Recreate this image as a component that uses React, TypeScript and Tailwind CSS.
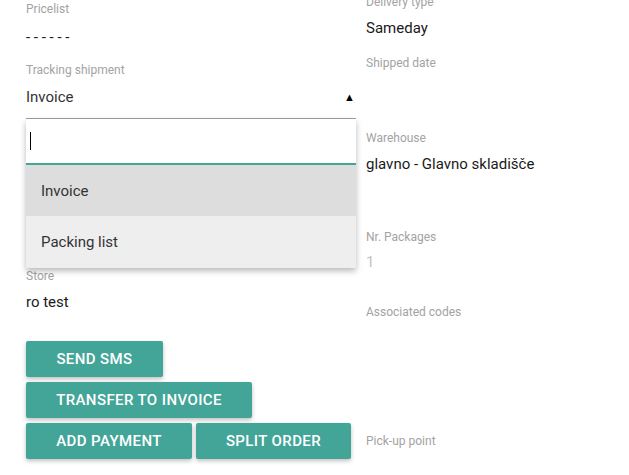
import { useState } from 'react';

const OPTIONS = ['Invoice', 'Packing list'];

function Label({ text, className = '' }: { text: string; className?: string }) {
  return <div className={`text-[12px] leading-[14px] text-[#a3a3a3] ${className}`}>{text}</div>;
}

function Value({ text, className = '' }: { text: string; className?: string }) {
  return <div className={`text-[15px] leading-[20px] text-[#1a1a1a] ${className}`}>{text}</div>;
}

function ActionButton({ label, width }: { label: string; width: string }) {
  return (
    <button
      className={`${width} h-[36px] rounded-[2px] bg-[#42a598] text-white text-[15px] font-medium tracking-[0.4px] uppercase shadow-[0_2px_4px_rgba(0,0,0,0.25)]`}
    >
      {label}
    </button>
  );
}

export default function App() {
  const [selected] = useState('Invoice');

  return (
    <div
      className="w-[629px] h-[475px] overflow-hidden bg-white flex pl-[26px] gap-[10px]"
      style={{ fontFamily: 'Roboto, "Noto Sans", sans-serif' }}
    >
      {/* Left column */}
      <div className="w-[330px] flex flex-col">
        <Label text="Pricelist" className="mt-[2px]" />
        <Value text="- - - - - -" className="mt-[11px]" />
        <Label text="Tracking shipment" className="mt-[16px]" />

        {/* Select with open menu */}
        <div className="relative mt-[10px]">
          <div className="flex items-center justify-between border-b border-[#9e9e9e] pb-[11px] h-[32px]">
            <span className="text-[15px] leading-[20px] text-[#333]">{selected}</span>
            <span className="text-[11px] leading-none text-black mr-[1px]">▲</span>
          </div>
          <div className="absolute left-0 right-0 top-full z-10 bg-white shadow-[0_3px_6px_rgba(0,0,0,0.28)]">
            <div className="h-[46px] flex items-center pl-[4px] border-b-2 border-[#42a598]">
              <div className="w-[1px] h-[18px] bg-black" />
            </div>
            {OPTIONS.map((opt) => (
              <div
                key={opt}
                className={`flex items-center pl-[15px] pt-[1px] text-[15px] text-[#333] ${
                  opt === selected ? 'bg-[#dddddd] h-[51px]' : 'bg-[#eeeeee] h-[52px]'
                }`}
              >
                {opt}
              </div>
            ))}
          </div>
        </div>

        <Label text="Store" className="mt-[150px]" />
        <Value text="ro test" className="mt-[9px]" />

        <div className="mt-[29px] flex flex-col gap-[5px]">
          <div className="flex">
            <ActionButton label="Send SMS" width="w-[137px]" />
          </div>
          <div className="flex">
            <ActionButton label="Transfer to invoice" width="w-[226px]" />
          </div>
          <div className="flex gap-[4px]">
            <ActionButton label="Add payment" width="w-[166px]" />
            <ActionButton label="Split order" width="w-[155px]" />
          </div>
        </div>
      </div>

      {/* Right column */}
      <div className="flex-1 flex flex-col">
        <Label text="Delivery type" className="-mt-[5px]" />
        <Value text="Sameday" className="mt-[9px]" />
        <Label text="Shipped date" className="mt-[18px]" />
        <Label text="Warehouse" className="mt-[61px]" />
        <Value text="glavno - Glavno skladišče" className="mt-[9px]" />
        <Label text="Nr. Packages" className="mt-[56px]" />
        <div className="mt-[8px] text-[15px] leading-[20px] text-[#c4c4c4]">1</div>
        <Label text="Associated codes" className="mt-[33px]" />
        <Label text="Pick-up point" className="mt-[115px]" />
      </div>
    </div>
  );
}
